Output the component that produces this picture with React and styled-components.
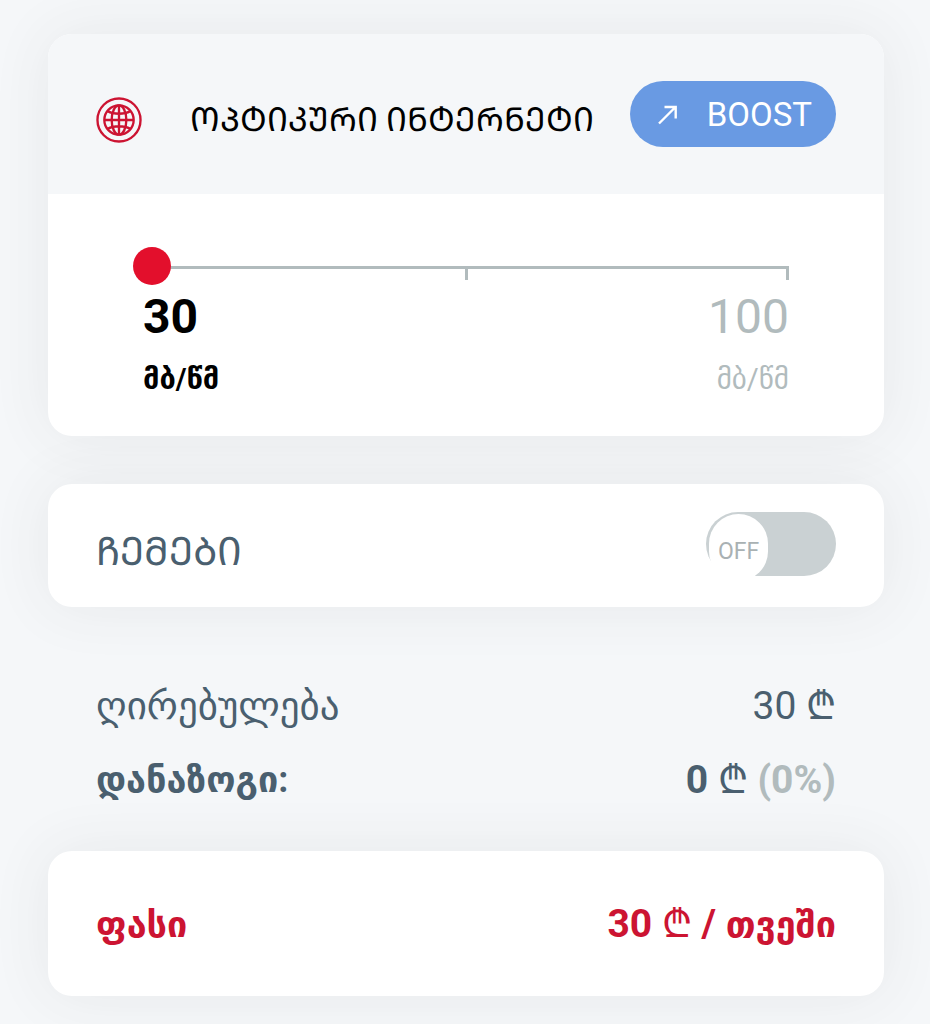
import React, { useState } from "react";
import styled, { createGlobalStyle } from "styled-components";

const GlobalStyle = createGlobalStyle`
    body {
        margin: 0;
        background-color: #f5f7f9;
        font-family: Roboto, "DejaVu Sans", sans-serif;
        color: #000;
    }
    * {
        box-sizing: border-box;
    }
    svg {
        flex-shrink: 0;
    }
`;

const Page = styled.main`
    display: flex;
    flex-direction: column;
    padding: 34px 46px 28px 48px;
`;

const Card = styled.section`
    background-color: #fff;
    border-radius: 24px;
    box-shadow: 0 0 60px rgba(60, 60, 60, 0.08);
`;

const CardHeader = styled.header`
    display: flex;
    align-items: center;
    height: 160px;
    padding: 12px 48px 0;
    background-color: #f5f7f9;
    border-radius: 24px 24px 0 0;
`;

const Title = styled.h2`
    flex: 1;
    margin: 0 0 0 48px;
    font-size: 33px;
    line-height: 48px;
    font-weight: 400;
    white-space: nowrap;
`;

const BoostButton = styled.button`
    display: flex;
    flex-shrink: 0;
    align-items: center;
    justify-content: space-between;
    width: 206px;
    height: 66px;
    margin-bottom: 12px;
    padding: 2px 24px 0 28px;
    border: 0;
    border-radius: 33px;
    background-color: #699ae3;
    color: #fff;
    font-family: inherit;
    font-size: 33px;
    line-height: 40px;
    cursor: pointer;
`;

const SpeedBody = styled.div`
    padding: 53px 95px 39px;
`;

const Slider = styled.input`
    display: block;
    appearance: none;
    width: calc(100% + 10px);
    height: 38px;
    margin: 0 0 0 -10px;
    cursor: pointer;
    background-color: transparent;
    background-image: linear-gradient(#b1bbbd, #b1bbbd), linear-gradient(#b1bbbd, #b1bbbd),
        linear-gradient(#b1bbbd, #b1bbbd);
    background-repeat: no-repeat;
    background-size: calc(100% - 10px) 3px, 3px 14px, 3px 14px;
    background-position: 10px 19px, calc(50% + 5px) 19px, 100% 19px;

    &::-webkit-slider-thumb {
        appearance: none;
        width: 38px;
        height: 38px;
        border-radius: 50%;
        background-color: #e30f2c;
    }
`;

const Marks = styled.div`
    display: flex;
    justify-content: space-between;
    margin-top: 4px;
`;

const Mark = styled.div`
    color: ${(props) => (props.$active ? "#000" : "#b1bbbd")};
    font-weight: ${(props) => (props.$active ? 700 : 400)};
    text-align: ${(props) => (props.$active ? "start" : "end")};
`;

const Speed = styled.div`
    font-size: 48px;
    line-height: 56px;
`;

const Unit = styled.div`
    margin-top: 16px;
    font-size: 29px;
    line-height: 36px;
`;

const OptionCard = styled(Card)`
    display: flex;
    align-items: center;
    justify-content: space-between;
    height: 123px;
    margin-top: 48px;
    padding: 0 48px;
`;

const OptionName = styled.h2`
    margin: 12px 0 0;
    color: #4a5f6f;
    font-size: 39px;
    line-height: 48px;
    font-weight: 400;
`;

const Switch = styled.label`
    display: block;
    width: 130px;
    height: 64px;
    margin-bottom: 4px;
    padding: 2px 3px;
    border-radius: 32px;
    background-color: #cad1d3;
    cursor: pointer;
`;

const SwitchInput = styled.input`
    position: absolute;
    opacity: 0;
`;

const Knob = styled.span`
    display: flex;
    align-items: center;
    justify-content: center;
    width: 59px;
    height: 67px;
    margin-left: ${(props) => (props.$on ? "65px" : "0")};
    padding-top: 8px;
    border-radius: 30px;
    background-color: #fff;
    color: #a9b1b3;
    font-size: 23px;
`;

const Summary = styled.dl`
    margin: 0;
    padding: 62px 48px 34px;
    color: #4a5f6f;
`;

const SummaryRow = styled.div`
    display: flex;
    justify-content: space-between;
    font-size: 39px;
    line-height: 74px;
    font-weight: ${(props) => (props.$bold ? 700 : 400)};
`;

const Name = styled.dt`
    font-size: ${(props) => (props.$bold ? "36px" : "39px")};
`;

const Value = styled.dd`
    margin: 0;
    white-space: nowrap;
`;

const Currency = styled.span`
    font-weight: 400;
`;

const Percent = styled.span`
    color: #b1bbbd;
`;

const TotalCard = styled(Card)`
    display: flex;
    align-items: center;
    justify-content: space-between;
    height: 145px;
    padding: 2px 48px 0;
    color: #cc1432;
    font-size: 39px;
    line-height: 48px;
    font-weight: 700;
`;

const TotalText = styled.span`
    font-size: 36px;
`;

const GlobeIcon = () => (
    <svg width="46" height="46" viewBox="0 0 47 47" fill="none" stroke="#cc1432" strokeWidth="2.4">
        <circle cx="23.5" cy="23.5" r="22" />
        <circle cx="23.5" cy="23.5" r="15" />
        <ellipse cx="23.5" cy="23.5" rx="7.5" ry="15" />
        <path d="M23.5 8.500v30M8.500 23.500h30M12 14.500c6 3.500 17 3.500 23 0M12 32.500c6-3.500 17-3.500 23 0" />
    </svg>
);

const ArrowIcon = () => (
    <svg width="20" height="20" viewBox="0 0 20 20" fill="none" stroke="#fff" strokeWidth="2.4">
        <path d="M1 18.500L17.500 2M6.500 2H17.700V13.500" />
    </svg>
);

const App = () => {
    const [speed, setSpeed] = useState(30);
    const [channels, setChannels] = useState(false);

    return (
        <Page>
            <GlobalStyle />
            <Card>
                <CardHeader>
                    <GlobeIcon />
                    <Title>ᲝᲞᲢᲘᲙᲣᲠᲘ ᲘᲜᲢᲔᲠᲜᲔᲢᲘ</Title>
                    <BoostButton type="button">
                        <ArrowIcon />
                        BOOST
                    </BoostButton>
                </CardHeader>
                <SpeedBody>
                    <Slider
                        type="range"
                        min="30"
                        max="100"
                        step="35"
                        value={speed}
                        aria-label="მბ/წმ"
                        onChange={(e) => setSpeed(Number(e.target.value))}
                    />
                    <Marks>
                        <Mark $active>
                            <Speed>30</Speed>
                            <Unit>მბ/წმ</Unit>
                        </Mark>
                        <Mark>
                            <Speed>100</Speed>
                            <Unit>მბ/წმ</Unit>
                        </Mark>
                    </Marks>
                </SpeedBody>
            </Card>

            <OptionCard>
                <OptionName id="channels">ᲩᲔᲛᲔᲑᲘ</OptionName>
                <Switch>
                    <SwitchInput
                        type="checkbox"
                        aria-labelledby="channels"
                        checked={channels}
                        onChange={(e) => setChannels(e.target.checked)}
                    />
                    <Knob $on={channels}>{channels ? "ON" : "OFF"}</Knob>
                </Switch>
            </OptionCard>

            <Summary>
                <SummaryRow>
                    <Name>ღირებულება</Name>
                    <Value>
                        30 <Currency>₾</Currency>
                    </Value>
                </SummaryRow>
                <SummaryRow $bold>
                    <Name $bold>დანაზოგი:</Name>
                    <Value>
                        0 <Currency>₾</Currency> <Percent>(0%)</Percent>
                    </Value>
                </SummaryRow>
            </Summary>

            <TotalCard>
                <TotalText>ფასი</TotalText>
                <span>
                    30 <Currency>₾</Currency> / <TotalText>თვეში</TotalText>
                </span>
            </TotalCard>
        </Page>
    );
};

export default App;
